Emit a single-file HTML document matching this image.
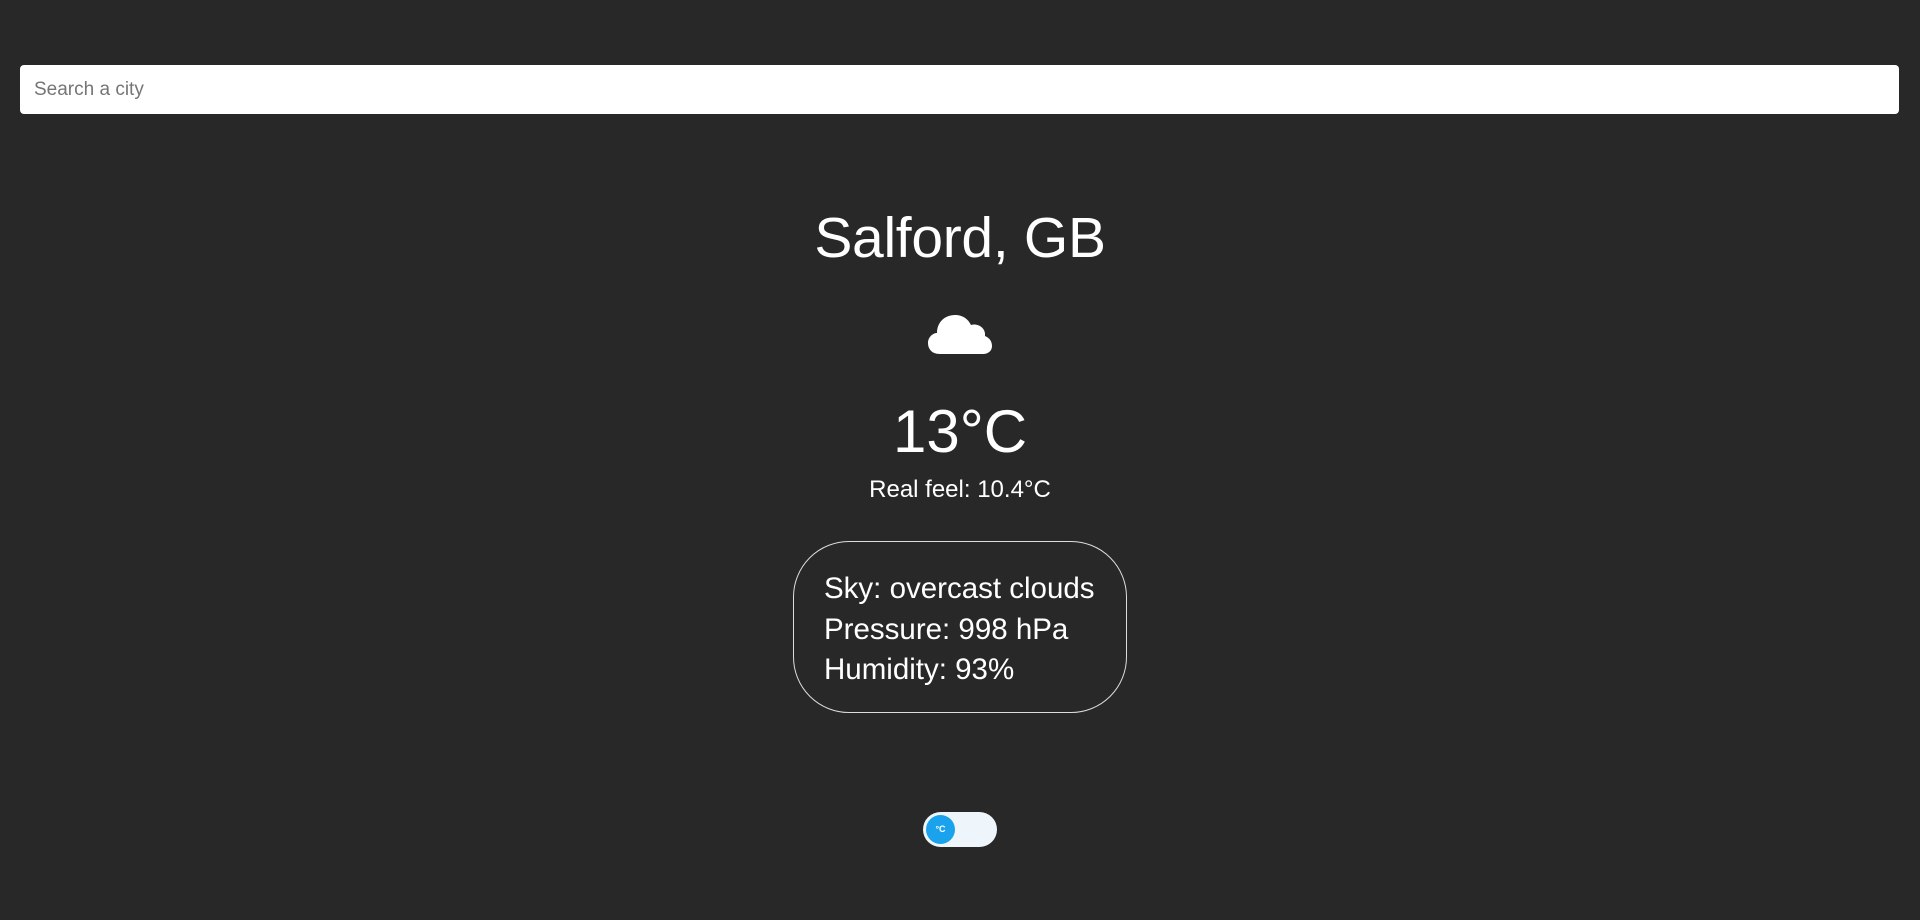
<!DOCTYPE html>
<html><head><meta charset="utf-8"><style>
html,body{margin:0;padding:0;background:#282828;width:1920px;height:920px;overflow:hidden;font-family:"Liberation Sans",sans-serif;color:#fff}
.search{position:absolute;left:20px;top:65px;width:1879px;height:49px;background:#fff;border-radius:4px;box-sizing:border-box;padding-left:14px;line-height:49px;font-size:19px;color:#757575}
.c{position:absolute;left:0;width:1920px;text-align:center;font-weight:300}
.box{position:absolute;left:793px;top:541px;width:334px;height:172px;box-sizing:border-box;border:1px solid #ddd;border-radius:56px;padding:27px 0 0 30px;font-size:29.5px;line-height:40.5px}
.tog{position:absolute;left:923px;top:812px;width:74px;height:35px;border-radius:18px;background:#eef6fc}
.knob{position:absolute;left:3px;top:3px;width:29px;height:29px;border-radius:50%;background:#1aa3ec;color:#fff;font-size:9px;font-weight:bold;text-align:center;line-height:29px}
</style></head><body>
<div class="search">Search a city</div>
<div class="c" style="top:200px;font-size:57px;line-height:76px;letter-spacing:-0.3px">Salford, GB</div>
<svg style="position:absolute;left:926px;top:306px" width="68" height="52" viewBox="0 0 68 52"><path fill="#fff" d="M14 48 C5 48 2 42 2 37 C2 31 7 27 11 27 C11 16 19 9 29 9 C37 9 42 13 45 19 C52 17 60 22 59 30 C64 32 66 36 66 40 C66 45 62 48 57 48 Z"/></svg>
<div class="c" style="top:392px;font-size:60px;line-height:80px">13°C</div>
<div class="c" style="top:476px;font-size:24px;line-height:28px">Real feel: 10.4°C</div>
<div class="box">Sky: overcast clouds<br>Pressure: 998 hPa<br>Humidity: 93%</div>
<div class="tog"><div class="knob">°C</div></div>
</body></html>
